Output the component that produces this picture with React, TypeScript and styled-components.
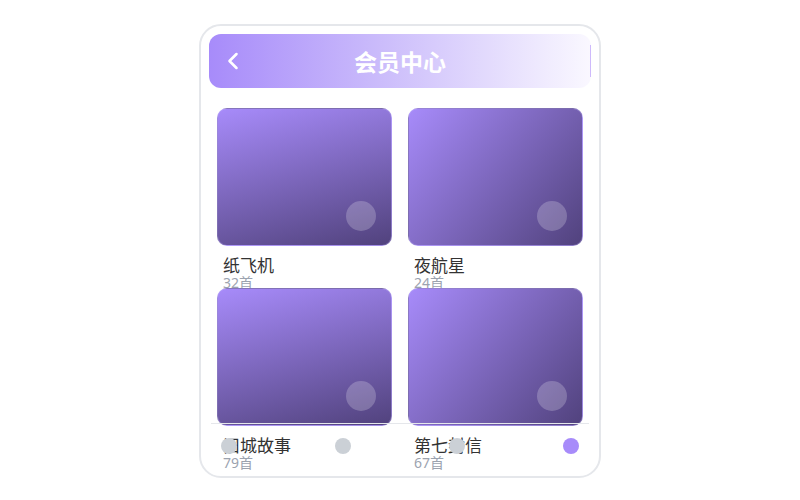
import React from "react";
import styled, { createGlobalStyle } from "styled-components";
import { ChevronLeft } from "lucide-react";

const Global = createGlobalStyle`
  html, body { margin: 0; padding: 0; background: #ffffff; }
  body { font-family: "Noto Sans", "Noto Sans CJK SC", sans-serif; }
`;

const Page = styled.div`
  display: flex;
  justify-content: center;
  padding-top: 24px;
`;

const Phone = styled.div`
  position: relative;
  box-sizing: border-box;
  width: 402px;
  height: 454px;
  border: 2px solid #e5e7eb;
  border-radius: 22px;
  padding: 8px;
  overflow: hidden;
  background: #ffffff;
`;

const Header = styled.header`
  position: relative;
  box-sizing: border-box;
  height: 54px;
  border-radius: 12px;
  background: linear-gradient(90deg, #a78bfa 0%, #cbbcfb 45%, #faf8ff 100%);
  display: flex;
  align-items: center;
  justify-content: center;
  &::after {
    content: "";
    position: absolute;
    right: 0;
    top: 11px;
    bottom: 11px;
    width: 1px;
    background: rgba(139, 92, 246, 0.4);
  }
`;

const Back = styled.button`
  position: absolute;
  left: 10px;
  top: 50%;
  transform: translateY(-50%);
  background: none;
  border: none;
  padding: 0;
  display: flex;
  color: #ffffff;
`;

const Title = styled.h1`
  margin: 0;
  font-family: "Noto Sans CJK SC", sans-serif;
  font-size: 23px;
  font-weight: 700;
  color: #ffffff;
`;

const Grid = styled.div`
  display: grid;
  grid-template-columns: 175px 175px;
  column-gap: 16px;
  row-gap: 16px;
  padding: 20px 8px 0;
`;

const Item = styled.div`
  height: 164px;
`;

const Cover = styled.div<{ $angle: number }>`
  position: relative;
  box-sizing: border-box;
  height: 138px;
  border-radius: 10px;
  border: 1px solid rgba(196, 181, 253, 0.35);
  background: linear-gradient(${(p) => p.$angle}deg, #a78bfa 0%, #51427d 100%);
`;

const Play = styled.span`
  position: absolute;
  right: 15px;
  bottom: 14px;
  width: 30px;
  height: 30px;
  border-radius: 50%;
  background: rgba(255, 255, 255, 0.22);
`;

const Info = styled.div`
  padding: 9px 6px 0;
`;

const Name = styled.div`
  font-family: "Noto Sans CJK SC", sans-serif;
  font-size: 17px;
  line-height: 20px;
  color: #333333;
`;

const Count = styled.div`
  font-family: "Noto Sans", "Noto Sans CJK SC", sans-serif;
  font-size: 14px;
  line-height: 15px;
  color: #9ca3af;
`;

const Nav = styled.nav`
  position: absolute;
  left: 10px;
  right: 10px;
  bottom: 8px;
  height: 44px;
  border-top: 1px solid #e5e7eb;
  padding: 0 10px;
  display: flex;
  align-items: center;
  justify-content: space-between;
`;

const Dot = styled.span<{ $active?: boolean }>`
  width: 16px;
  height: 16px;
  border-radius: 50%;
  background: ${(p) => (p.$active ? "#a78bfa" : "#cbd0d6")};
`;

const albums = [
  { name: "纸飞机", count: "32首", angle: 165 },
  { name: "夜航星", count: "24首", angle: 130 },
  { name: "旧城故事", count: "79首", angle: 165 },
  { name: "第七封信", count: "67首", angle: 130 },
];

export default function App() {
  return (
    <>
      <Global />
      <Page>
        <Phone>
          <Header>
            <Back aria-label="返回">
              <ChevronLeft size={28} strokeWidth={2.2} />
            </Back>
            <Title>会员中心</Title>
          </Header>
          <Grid>
            {albums.map((a) => (
              <Item key={a.name}>
                <Cover $angle={a.angle}>
                  <Play />
                </Cover>
                <Info>
                  <Name>{a.name}</Name>
                  <Count>{a.count}</Count>
                </Info>
              </Item>
            ))}
          </Grid>
          <Nav>
            <Dot />
            <Dot />
            <Dot />
            <Dot $active />
          </Nav>
        </Phone>
      </Page>
    </>
  );
}
